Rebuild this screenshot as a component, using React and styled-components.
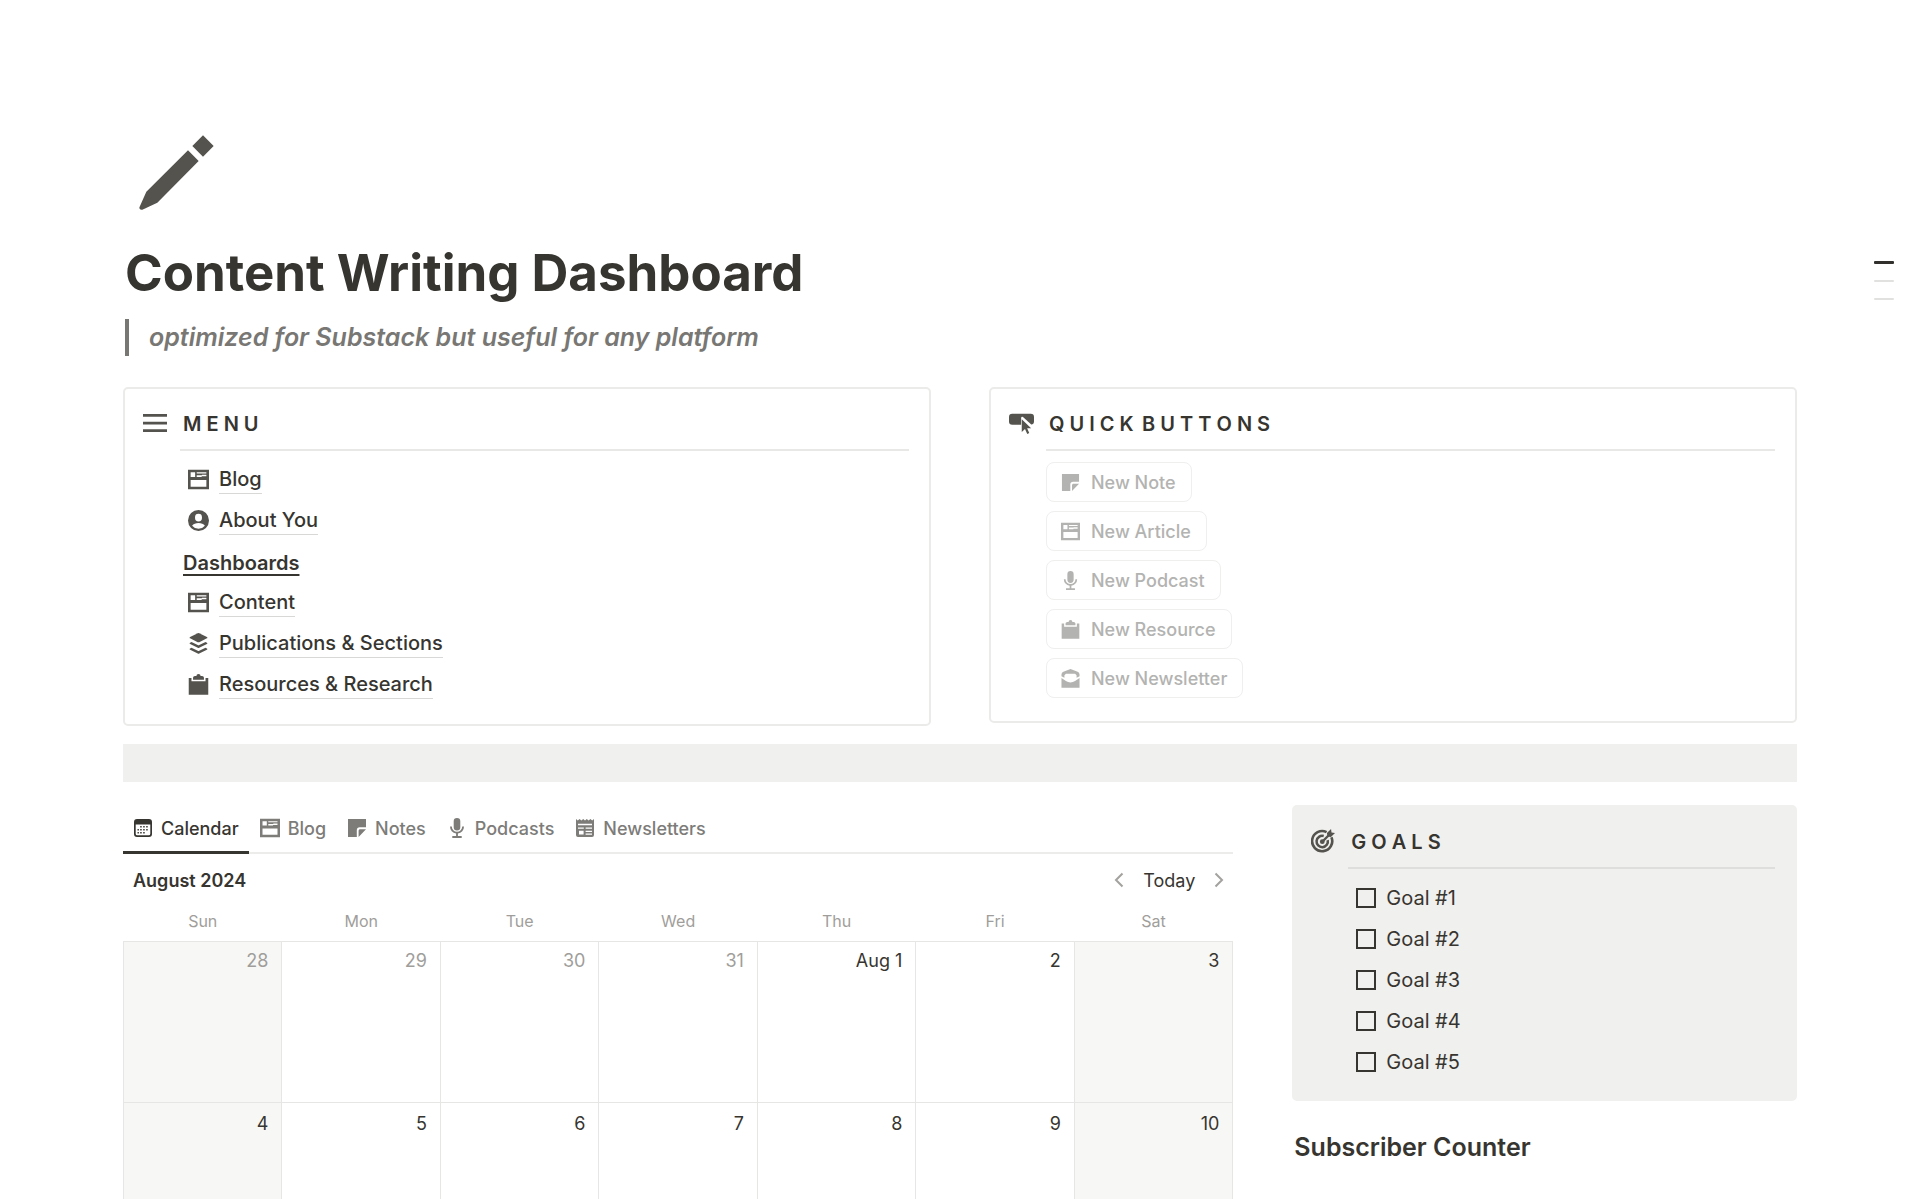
import React, { useState } from 'react';
import styled, { createGlobalStyle } from 'styled-components';

const GlobalStyle = createGlobalStyle`
  * { box-sizing: border-box; }
  body {
    margin: 0;
    background: #fff;
    color: #373530;
    font-family: Inter, "Liberation Sans", sans-serif;
    font-size: 20px;
  }
  button, input { font: inherit; color: inherit; }
`;

const Page = styled.main`
  padding: 135px 123px 0;
`;

const PageIcon = styled.svg`
  display: block;
  width: 75px;
  height: 75px;
  margin-left: 16px;
  fill: #55534e;
`;

const Title = styled.h1`
  margin: 33px 0 16px;
  padding-left: 2px;
  font-size: 51px;
  line-height: 60px;
  font-weight: 700;
`;

const Quote = styled.blockquote`
  margin: 0 0 31px 2px;
  padding-left: 20px;
  border-left: 4px solid #787774;
  font-size: 25px;
  line-height: 37px;
  font-style: italic;
  font-weight: 600;
  color: #787774;
`;

const Outline = styled.nav`
  position: absolute;
  top: 261px;
  right: 26px;
  display: flex;
  flex-direction: column;
  gap: 16px;
`;

const OutlineMark = styled.a`
  width: 20px;
  height: ${(p) => (p.$active ? 3 : 2)}px;
  border-radius: 1px;
  background: ${(p) => (p.$active ? '#32302c' : '#e1e1df')};
`;

const TopColumns = styled.div`
  display: grid;
  grid-template-columns: 1fr 1fr;
  align-items: start;
  gap: 58px;
`;

const BottomColumns = styled.div`
  display: grid;
  grid-template-columns: minmax(0, 11fr) minmax(0, 5fr);
  align-items: start;
  gap: 59px;
`;

const Callout = styled.section`
  display: grid;
  grid-template-columns: 24px minmax(0, 1fr);
  column-gap: 13px;
  padding: 10px 20px ${(p) => (p.$filled ? 17 : 19)}px ${(p) => (p.$filled ? 17 : 18)}px;
  border: 2px solid ${(p) => (p.$filled ? '#f0f0ee' : '#ebebea')};
  border-radius: 5px;
  background: ${(p) => (p.$filled ? '#f0f0ee' : '#fff')};
`;

const CalloutIcon = styled.div`
  display: flex;
  align-items: center;
  height: 48px;
  color: #55534e;
`;

const CalloutTitle = styled.h2`
  margin: 0;
  padding-left: 3px;
  font-size: 20px;
  line-height: 50px;
  font-weight: 600;
  border-bottom: 2px solid ${(p) => (p.$filled ? '#dededc' : '#e8e8e7')};
`;

const List = styled.ul`
  margin: 0;
  padding: 8px 0 0;
  list-style: none;
`;

const Row = styled.li`
  display: flex;
  align-items: center;
  gap: 10px;
  height: 41px;
  padding-left: 8px;
  color: #55534e;
`;

const PageLink = styled.a`
  line-height: 28px;
  font-weight: 500;
  color: #373530;
  text-decoration: none;
  border-bottom: 1px solid #d8d8d6;
`;

const GroupTitle = styled.li`
  height: 41px;
  padding: 3px 0 0 3px;
  line-height: 38px;
  font-weight: 600;

  span {
    text-decoration: underline;
    text-decoration-thickness: 2px;
    text-underline-offset: 4px;
    text-decoration-skip-ink: none;
  }
`;

const ButtonList = styled.div`
  display: flex;
  flex-direction: column;
  align-items: flex-start;
  gap: 9px;
  padding: 11px 0 4px;
`;

const QuickButton = styled.button`
  display: flex;
  align-items: center;
  gap: 11px;
  height: 40px;
  padding: 0 15px 0 14px;
  border: 1px solid #efefee;
  border-radius: 8px;
  background: #fff;
  font-size: 18px;
  font-weight: 500;
  color: #b3b3b1;
`;

const Band = styled.div`
  height: 38px;
  margin: 18px 0 23px;
  background: #f0f0ee;
`;

const Tabs = styled.div`
  display: flex;
  gap: 1px;
  height: 49px;
  border-bottom: 2px solid #ececeb;
`;

const Tab = styled.button`
  display: flex;
  align-items: center;
  gap: 8px;
  height: 49px;
  padding: 0 10px;
  border: 0;
  border-bottom: 3px solid ${(p) => (p.$active ? '#373530' : 'transparent')};
  background: none;
  font-size: 18px;
  font-weight: 500;
  color: ${(p) => (p.$active ? '#373530' : '#7d7c79')};
`;

const Toolbar = styled.div`
  display: flex;
  align-items: center;
  justify-content: space-between;
  height: 52px;
  padding: 0 4px 0 10px;
  font-size: 18px;
`;

const Month = styled.span`
  font-weight: 600;
`;

const Pager = styled.div`
  display: flex;
  align-items: center;
  gap: 14px;
`;

const PagerButton = styled.button`
  display: flex;
  padding: 0;
  border: 0;
  background: none;
  font-size: 18px;
`;

const CalendarTable = styled.table`
  width: 100%;
  table-layout: fixed;
  border-collapse: collapse;

  th {
    height: 35px;
    padding: 0 0 4px;
    font-size: 16px;
    font-weight: 400;
    color: #9f9e9b;
  }
`;

const Day = styled.td`
  height: 161px;
  padding: ${(p) => (p.$firstWeek ? 7 : 9)}px 13px 0 0;
  border: 1px solid #e6e6e4;
  background: ${(p) => (p.$weekend ? '#f7f7f5' : '#fff')};
  vertical-align: top;
  text-align: right;
  font-size: 18px;
  line-height: 24px;
  color: ${(p) => (p.$outside ? '#9f9e9b' : '#373530')};
`;

const GoalRow = styled.li`
  height: 41px;

  label {
    display: flex;
    align-items: center;
    gap: 10px;
    height: 41px;
    padding-left: 8px;
  }
`;

const Checkbox = styled.input`
  appearance: none;
  width: 20px;
  height: 20px;
  margin: 0;
  border: 2px solid #373530;

  &:checked { background: #373530; }
`;

const SectionTitle = styled.h3`
  margin: 26px 0 0;
  padding-left: 2px;
  font-size: 25px;
  line-height: 40px;
  font-weight: 600;
`;

const Svg = styled.svg`
  display: block;
  flex: none;
  fill: currentColor;
`;

// filled glyphs, all on a 20 x 20 canvas
const glyphs = {
  menu: <path d="M0 2.400h20v2.300H0zM0 8.900h20v2.300H0zM0 15.300h20v2.300H0z" />,
  button: (
    <>
      <path d="M2.6 2.2h14.8A2.6 2.6 0 0 1 20 4.8v3.4a2.6 2.6 0 0 1-2.2 2.6L11.400 4.900a1 1 0 0 0-1.700.7V11H2.600A2.600 2.600 0 0 1 0 8.400V4.800a2.600 2.600 0 0 1 2.600-2.600z" />
      <path d="M10.200 6.600l7.500 7.200h-3.200l1.700 3.700-1.600.8-1.800-3.900-2.600 2.300z" />
    </>
  ),
  page: (
    <path
      fillRule="evenodd"
      d="M0 .8h20v18.400H0zM2.500 3.200v4.300h4.300V3.200zM8.300 3.200v1h9.200v-1zM8.300 5.900v1.600h4.700V7h4.500V5.500h-4.200v.4zM2.500 10.500v6.300h15v-6.300z"
    />
  ),
  person: (
    <path
      fillRule="evenodd"
      d="M10 0a10 10 0 1 1 0 20 10 10 0 0 1 0-20zM10 3.600a3.300 3.300 0 0 0-3.300 3.300v.8a3.300 3.300 0 0 0 6.600 0v-.8A3.300 3.300 0 0 0 10 3.600zM10 12.400c-2.600 0-4.900 1-6.100 2.500a7.900 7.900 0 0 0 12.200 0c-1.200-1.500-3.500-2.500-6.100-2.500z"
    />
  ),
  layers: (
    <>
      <path d="M9.300.200a1.600 1.600 0 0 1 1.400 0l7.300 3.600c.6.300.6 1 0 1.300l-7.300 3.600a1.600 1.600 0 0 1-1.400 0L2 5.100c-.6-.3-.6-1 0-1.300z" />
      <path d="M3.300 8.500l6 3a1.600 1.600 0 0 0 1.400 0l6-3 1.300.7c.6.300.6 1 0 1.300l-7.300 3.600a1.600 1.600 0 0 1-1.400 0L2 10.500c-.6-.3-.6-1 0-1.300z" />
      <path d="M3.300 14l6 3a1.600 1.600 0 0 0 1.400 0l6-3 1.300.7c.6.300.6 1 0 1.300l-7.300 3.600a1.600 1.600 0 0 1-1.400 0L2 16c-.6-.3-.6-1 0-1.300z" />
    </>
  ),
  clipboard: (
    <path d="M8 2a2 2 0 0 1 4 0h1.400c1 0 1.800.8 1.800 1.800v1.700H4.800V3.800C4.800 2.800 5.600 2 6.600 2zM.7 3.700h2.600V7h13.400V3.700h2.600v16H.7z" />
  ),
  note: <path d="M1 1h18v8.200h-6.200a3 3 0 0 0-3 3V19H1zM11.600 19v-6.300c0-.8.7-1.500 1.500-1.500H19z" />,
  mic: (
    <>
      <path d="M10 0a3.300 3.300 0 0 1 3.300 3.300v6a3.300 3.300 0 0 1-6.600 0v-6A3.300 3.300 0 0 1 10 0z" />
      <path d="M3 8.600h1.800a5.200 5.200 0 0 0 10.400 0H17a7 7 0 0 1-6.100 7v2.500h3.800V20H5.300v-1.900h3.800v-2.500A7 7 0 0 1 3 8.600z" />
    </>
  ),
  mail: (
    <>
      <path d="M10 0l7.500 2.900a3 3 0 0 1 2 2.800v1.800L16.400 9.300V6.500L14.800 5H5.200L3.600 6.500v2.800L.5 7.500V5.700a3 3 0 0 1 2-2.800z" />
      <path d="M.5 9.500l4.700 3.200c2.900 2 6.700 2 9.600 0l4.700-3.200V19.800H.5z" />
    </>
  ),
  calendar: (
    <path
      fillRule="evenodd"
      d="M4 1h12a3 3 0 0 1 3 3v12a3 3 0 0 1-3 3H4a3 3 0 0 1-3-3V4a3 3 0 0 1 3-3zM2.700 6.500v9.200A1.600 1.600 0 0 0 4.300 17.300h11.400a1.600 1.600 0 0 0 1.600-1.600V6.500zM10.200 8h1.500v1.500h-1.500zM13.200 8h1.500v1.500h-1.500zM7.200 8h1.500v1.500H7.200zM4.500 11h1.400v1.500H4.500zM7.200 11h1.500v1.500H7.200zM10.200 11h1.500v1.500h-1.500zM13.200 11h1.500v1.500h-1.500zM4.500 14h1.400v1.400H4.500zM7.200 14h1.500v1.400H7.200zM10.200 14h1.500v1.400h-1.500z"
    />
  ),
  news: (
    <path
      fillRule="evenodd"
      d="M1 1l1.800 1.400L4.600 1l1.800 1.400L8.200 1 10 2.400 11.800 1l1.800 1.400L15.400 1l1.800 1.400L19 1v16a2 2 0 0 1-2 2H3a2 2 0 0 1-2-2zM3 5.800v1.500h14V5.800zM3 9.600v1.200h5.800V9.600zM4 12.700v3.800h4.600v-3.800zM10.600 9.600v1.200H17V9.600zM10.600 12.700v1.200H17v-1.200zM10.600 15.500v1.200H17v-1.200z"
    />
  ),
  target: (
    <>
      <g fill="none" stroke="currentColor">
        <path strokeWidth="2.200" d="M13 2.600A8.400 8.400 0 1 0 17 6.800" />
        <path strokeWidth="2.100" d="M10.600 5.900a4.700 4.700 0 1 0 3.300 3.400" />
        <path strokeWidth="1.900" d="M9.400 10.600l6.300-6.300" />
      </g>
      <circle cx="9.400" cy="10.600" r="2" />
      <path d="M13.300 3.400L16.700 0l.4 2.900 2.900.4-3.400 3.400-2.900-.4z" />
    </>
  ),
};

const Icon = ({ name, size = 20 }) => (
  <Svg viewBox="0 0 20 20" width={size} height={size} aria-hidden="true">{glyphs[name]}</Svg>
);

const Chevron = ({ d }) => (
  <svg width="20" height="20" viewBox="0 0 20 20" fill="none" stroke="#a3a29f" strokeWidth="2" aria-hidden="true">
    <path d={d} />
  </svg>
);

const pages = [
  { icon: 'page', name: 'Blog' },
  { icon: 'person', name: 'About You' },
];

const dashboards = [
  { icon: 'page', name: 'Content' },
  { icon: 'layers', name: 'Publications & Sections' },
  { icon: 'clipboard', name: 'Resources & Research' },
];

const quickButtons = [
  { icon: 'note', name: 'New Note' },
  { icon: 'page', name: 'New Article' },
  { icon: 'mic', name: 'New Podcast' },
  { icon: 'clipboard', name: 'New Resource' },
  { icon: 'mail', name: 'New Newsletter' },
];

const tabs = [
  { icon: 'calendar', name: 'Calendar' },
  { icon: 'page', name: 'Blog' },
  { icon: 'note', name: 'Notes' },
  { icon: 'mic', name: 'Podcasts' },
  { icon: 'news', name: 'Newsletters' },
];

const weekdays = ['Sun', 'Mon', 'Tue', 'Wed', 'Thu', 'Fri', 'Sat'];

const weeks = [
  ['28', '29', '30', '31', 'Aug 1', '2', '3'],
  ['4', '5', '6', '7', '8', '9', '10'],
];

const goals = ['Goal #1', 'Goal #2', 'Goal #3', 'Goal #4', 'Goal #5'];

const PageRow = ({ icon, name }) => (
  <Row>
    <Icon name={icon} size={21} />
    <PageLink href="#">{name}</PageLink>
  </Row>
);

const App = () => {
  const [tab, setTab] = useState('Calendar');
  const [done, setDone] = useState([]);

  const toggle = (goal) => {
    setDone(done.includes(goal) ? done.filter((g) => g !== goal) : [...done, goal]);
  };

  return (
    <>
      <GlobalStyle />
      <Outline>
        <OutlineMark href="#" $active />
        <OutlineMark href="#" />
        <OutlineMark href="#" />
      </Outline>
      <Page>
        <PageIcon viewBox="27 30 225 225" aria-hidden="true">
          <path d="M219 31l32 32-32 32-32-32zM174 76l32 32L82 233l-45 21c-6 2-11-3-8-9l20-45z" />
        </PageIcon>
        <Title>Content Writing Dashboard</Title>
        <Quote>optimized for Substack but useful for any platform</Quote>

        <TopColumns>
          <Callout>
            <CalloutIcon><Icon name="menu" size={24} /></CalloutIcon>
            <div>
              <CalloutTitle>M E N U</CalloutTitle>
              <List>
                {pages.map((page) => <PageRow key={page.name} {...page} />)}
                <GroupTitle><span>Dashboards</span></GroupTitle>
                {dashboards.map((page) => <PageRow key={page.name} {...page} />)}
              </List>
            </div>
          </Callout>

          <Callout>
            <CalloutIcon><Icon name="button" size={25} /></CalloutIcon>
            <div>
              <CalloutTitle>Q U I C K&thinsp; B U T T O N S</CalloutTitle>
              <ButtonList>
                {quickButtons.map(({ icon, name }) => (
                  <QuickButton key={name} type="button">
                    <Icon name={icon} size={19} />
                    {name}
                  </QuickButton>
                ))}
              </ButtonList>
            </div>
          </Callout>
        </TopColumns>

        <Band />

        <BottomColumns>
          <div>
            <Tabs role="tablist">
              {tabs.map(({ icon, name }) => (
                <Tab
                  key={name}
                  type="button"
                  role="tab"
                  aria-selected={tab === name}
                  $active={tab === name}
                  onClick={() => setTab(name)}
                >
                  <Icon name={icon} />
                  {name}
                </Tab>
              ))}
            </Tabs>
            <Toolbar>
              <Month>August 2024</Month>
              <Pager>
                <PagerButton type="button"><Chevron d="M13.500 3.500L7 10l6.500 6.500" /></PagerButton>
                <PagerButton type="button">Today</PagerButton>
                <PagerButton type="button"><Chevron d="M6.500 3.500L13 10l-6.500 6.500" /></PagerButton>
              </Pager>
            </Toolbar>
            <CalendarTable>
              <thead>
                <tr>{weekdays.map((day) => <th key={day} scope="col">{day}</th>)}</tr>
              </thead>
              <tbody>
                {weeks.map((week, w) => (
                  <tr key={week[0]}>
                    {week.map((day, d) => (
                      <Day
                        key={day}
                        $firstWeek={w === 0}
                        $weekend={d === 0 || d === 6}
                        $outside={w === 0 && d < 4}
                      >
                        {day}
                      </Day>
                    ))}
                  </tr>
                ))}
              </tbody>
            </CalendarTable>
          </div>

          <div>
            <Callout $filled>
              <CalloutIcon><Icon name="target" size={24} /></CalloutIcon>
              <div>
                <CalloutTitle $filled>G O A L S</CalloutTitle>
                <List>
                  {goals.map((goal) => (
                    <GoalRow key={goal}>
                      <label>
                        <Checkbox type="checkbox" checked={done.includes(goal)} onChange={() => toggle(goal)} />
                        {goal}
                      </label>
                    </GoalRow>
                  ))}
                </List>
              </div>
            </Callout>
            <SectionTitle>Subscriber Counter</SectionTitle>
          </div>
        </BottomColumns>
      </Page>
    </>
  );
};

export default App;
